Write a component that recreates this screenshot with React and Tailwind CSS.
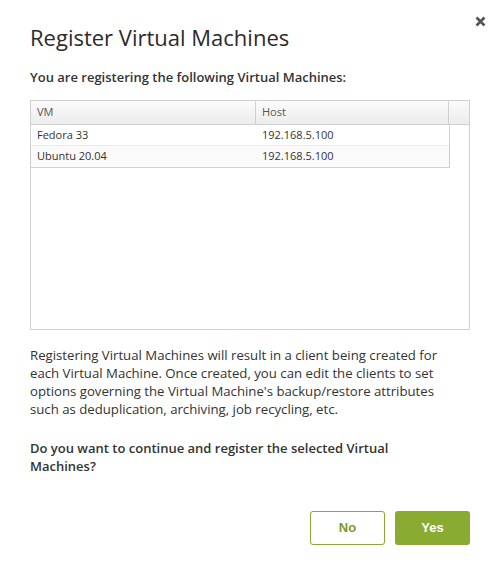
export default function App() {
  const rows = [
    { vm: "Fedora 33", host: "192.168.5.100" },
    { vm: "Ubuntu 20.04", host: "192.168.5.100" },
  ];
  return (
    <div className="relative w-[500px] h-[570px] bg-white text-[#333]" style={{ fontFamily: '"Open Sans", sans-serif' }}>
      <button className="absolute left-[474px] top-[14px] w-[12px] h-[14px] flex items-center justify-center">
        <svg width="11" height="11" viewBox="0 0 11 11">
          <path d="M1.5 1.5 L9.5 9.5 M9.5 1.5 L1.5 9.5" stroke="#555" strokeWidth="2.6" strokeLinecap="butt" />
        </svg>
      </button>
      <div className="pl-[30px] pr-[30px] pt-[22px]">
        <h1 className="text-[22px] leading-[30px] text-[#2b2b2b] font-normal">Register Virtual Machines</h1>
        <p className="mt-[16px] text-[13px] leading-[18px] font-semibold text-[#333]">You are registering the following Virtual Machines:</p>
        <div className="mt-[14px] w-[440px] h-[230px] border border-[#d0d0d0] flex flex-col">
          <div className="flex h-[24px] border-b border-[#d0d0d0] bg-gradient-to-b from-[#fbfbfb] to-[#ececec] text-[11px] text-[#555]">
            <div className="w-[225px] pl-[6px] border-r border-[#d0d0d0] flex items-center">VM</div>
            <div className="w-[193px] pl-[6px] border-r border-[#d0d0d0] flex items-center">Host</div>
            <div className="flex-1"></div>
          </div>
          <div className="w-[419px] border-r border-b border-[#d0d0d0]">
            {rows.map((r, i) => (
              <div key={i} className={`flex h-[21px] items-center text-[11px] text-[#333] ${i === 0 ? "bg-white border-b border-[#ececec]" : "bg-[#fafafa]"}`}>
                <div className="w-[225px] pl-[6px]">{r.vm}</div>
                <div className="flex-1 pl-[6px]">{r.host}</div>
              </div>
            ))}
          </div>
        </div>
        <p className="mt-[16px] text-[13.2px] leading-[18px] text-[#333] w-[425px]">
          Registering Virtual Machines will result in a client being created for each Virtual Machine. Once created, you can edit the clients to set options governing the Virtual Machine's backup/restore attributes such as deduplication, archiving, job recycling, etc.
        </p>
        <p className="mt-[21px] text-[13px] leading-[18px] font-semibold text-[#333] w-[400px]">
          Do you want to continue and register the selected Virtual Machines?
        </p>
        <div className="mt-[36px] flex justify-end gap-[10px] pr-0 w-[440px]">
          <button className="w-[75px] h-[34px] rounded-[3px] border border-[#8aa832] bg-white text-[#7a9a26] text-[13px] font-bold" style={{ fontFamily: '"Liberation Sans", Arial, sans-serif' }}>No</button>
          <button className="w-[75px] h-[34px] rounded-[3px] bg-[#8aab31] text-white text-[13px] font-bold" style={{ fontFamily: '"Liberation Sans", Arial, sans-serif' }}>Yes</button>
        </div>
      </div>
    </div>
  );
}
